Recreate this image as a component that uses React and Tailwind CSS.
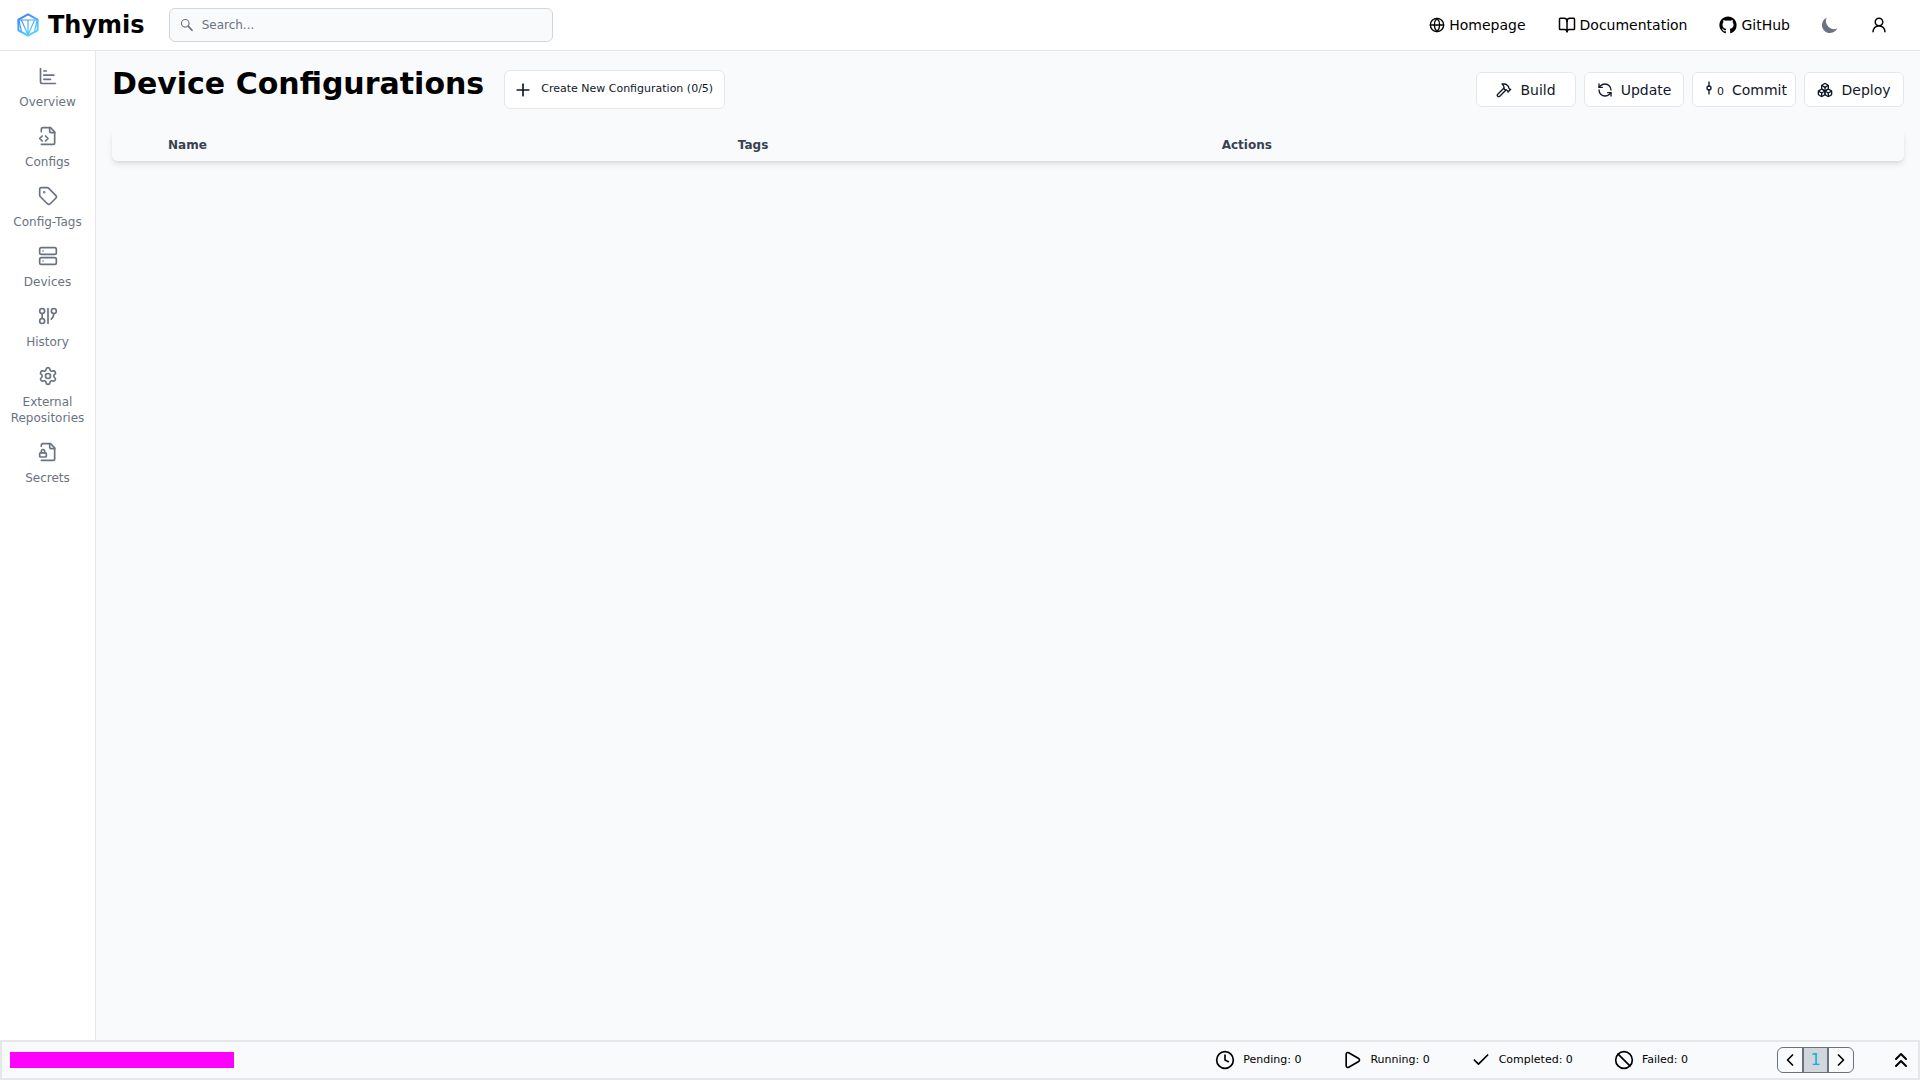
import React from "react";
import {
  Globe, BookOpen, ChartBar, Tag, Server, Settings, Hammer, RefreshCcw, Boxes, Plus,
  Clock, Play, Check, Ban, ChevronLeft, ChevronRight, ChevronsUp,
} from "lucide-react";

const stroke = {
  fill: "none",
  stroke: "currentColor",
  strokeWidth: 2,
  strokeLinecap: "round",
  strokeLinejoin: "round",
  viewBox: "0 0 24 24",
};

function Logo() {
  return (
    <svg className="h-6 w-6" viewBox="0 0 24 24" fill="none" stroke="url(#logoGradient)" strokeWidth="2" strokeLinejoin="round" aria-hidden="true">
      <defs>
        <linearGradient id="logoGradient" x1="4" y1="2" x2="18" y2="22" gradientUnits="userSpaceOnUse">
          <stop stopColor="#3b82f6" />
          <stop offset="1" stopColor="#5ad8fb" />
        </linearGradient>
      </defs>
      <path d="M12 1.3 L21.6 6.6 V17.4 L12 22.7 L2.4 17.4 V6.6 Z" />
      <path d="M2.8 7 H21.2 M12 7 V22 M5.4 7 L12 22 L18.6 7 M3 8 L5.5 18.5 M21 8 L18.5 18.5" strokeWidth="1.2" />
    </svg>
  );
}

function FileCode(props) {
  return (
    <svg {...stroke} {...props} aria-hidden="true">
      <path d="M4 7V4a2 2 0 0 1 2-2h9l5 5v13a2 2 0 0 1-2 2H4" />
      <path d="M14 2v4a2 2 0 0 0 2 2h4M5 12l-3 3 3 3M9 18l3-3-3-3" />
    </svg>
  );
}

function FileLock(props) {
  return (
    <svg {...stroke} {...props} aria-hidden="true">
      <path d="M4 5V4a2 2 0 0 1 2-2h9l5 5v13a2 2 0 0 1-2 2H4" />
      <path d="M14 2v4a2 2 0 0 0 2 2h4" />
      <rect x="2" y="13" width="8" height="5" rx="1" />
      <path d="M8 13v-2a2 2 0 1 0-4 0v2" />
    </svg>
  );
}

function HistoryIcon(props) {
  return (
    <svg {...stroke} {...props} aria-hidden="true">
      <circle cx="5" cy="6" r="3" />
      <path d="M5 9v6M12 3v18" />
      <circle cx="5" cy="18" r="3" />
      <circle cx="19" cy="6" r="3" />
      <path d="M16 15.7A9 9 0 0 0 19 9" />
    </svg>
  );
}

function CommitIcon(props) {
  return (
    <svg {...stroke} {...props} aria-hidden="true">
      <path d="M12 3v6M12 15v6" />
      <circle cx="12" cy="12" r="3" />
    </svg>
  );
}

function UserIcon(props) {
  return (
    <svg {...stroke} {...props} aria-hidden="true">
      <circle cx="12" cy="8" r="5" />
      <path d="M20 21a8 8 0 0 0-16 0" />
    </svg>
  );
}

function GitHubIcon(props) {
  return (
    <svg viewBox="0 0 24 24" fill="currentColor" {...props} aria-hidden="true">
      <path d="M12 .5C5.65.5.5 5.65.5 12c0 5.09 3.29 9.4 7.86 10.92.58.1.79-.25.79-.55v-2.1c-3.2.7-3.87-1.36-3.87-1.36-.52-1.33-1.28-1.69-1.28-1.69-1.04-.71.08-.7.08-.7 1.16.08 1.77 1.19 1.77 1.19 1.03 1.76 2.69 1.25 3.35.96.1-.75.4-1.25.73-1.54-2.55-.29-5.24-1.28-5.24-5.69 0-1.26.45-2.28 1.19-3.09-.12-.29-.52-1.46.11-3.05 0 0 .97-.31 3.17 1.18a11 11 0 0 1 5.76 0c2.2-1.49 3.17-1.18 3.17-1.18.63 1.59.23 2.76.11 3.05.74.81 1.19 1.83 1.19 3.09 0 4.42-2.7 5.39-5.26 5.68.41.36.78 1.06.78 2.14v3.11c0 .3.21.66.79.55A11.51 11.51 0 0 0 23.5 12C23.5 5.65 18.35.5 12 .5z" />
    </svg>
  );
}

const navItems = [
  { label: "Overview", icon: ChartBar },
  { label: "Configs", icon: FileCode },
  { label: "Config-Tags", icon: Tag },
  { label: "Devices", icon: Server },
  { label: "History", icon: HistoryIcon },
  { label: "External Repositories", icon: Settings },
  { label: "Secrets", icon: FileLock },
];

const statuses = [
  { label: "Pending: 0", icon: Clock },
  { label: "Running: 0", icon: Play },
  { label: "Completed: 0", icon: Check },
  { label: "Failed: 0", icon: Ban },
];

const actionClass =
  "flex h-[35px] min-w-[100px] items-center justify-center gap-2 rounded-md border border-gray-200 bg-white px-2 text-sm text-gray-900";

export default function App() {
  return (
    <div className="flex h-screen flex-col bg-gray-50 font-['DejaVu_Sans',sans-serif] text-black">
      <header className="flex items-center justify-between border-b border-gray-200 bg-white px-4 py-2">
        <div className="flex items-center">
          <a href="#" className="flex items-center gap-2">
            <Logo />
            <span className="text-2xl leading-8 font-bold">Thymis</span>
          </a>
          <label className="ml-6 flex h-[34px] w-96 items-center gap-2 rounded-md border border-gray-300 bg-gray-50 px-2.5 text-gray-500">
            <svg {...stroke} className="h-3.5 w-3.5 shrink-0" aria-hidden="true">
              <circle cx="9" cy="9" r="6.5" />
              <path d="M14 14l6.5 7" strokeWidth="3" />
            </svg>
            <input type="text" aria-label="Search" placeholder="Search..." className="min-w-0 flex-1 bg-transparent text-xs outline-none placeholder:text-gray-500" />
          </label>
        </div>
        <div className="flex items-center gap-[30px] pr-4">
          <nav className="flex items-center gap-8 text-sm">
            <a href="#" className="flex items-center gap-1"><Globe size={16} />Homepage</a>
            <a href="#" className="flex items-center gap-1"><BookOpen size={18} />Documentation</a>
            <a href="#" className="flex items-center gap-1"><GitHubIcon className="h-[18px] w-[18px]" />GitHub</a>
          </nav>
          <button type="button" aria-label="Toggle dark mode" className="text-gray-500">
            <svg className="h-5 w-5" viewBox="0 0 20 20" fill="currentColor" aria-hidden="true">
              <path d="M17.293 13.293A8 8 0 0 1 6.707 2.707a8.001 8.001 0 1 0 10.586 10.586z" />
            </svg>
          </button>
          <button type="button" aria-label="Account"><UserIcon className="h-[18px] w-[18px]" /></button>
        </div>
      </header>

      <div className="flex min-h-0 flex-1">
        <aside className="w-24 shrink-0 border-r border-gray-200 bg-white pt-[7px]">
          <ul>
            {navItems.map(({ label, icon: Icon }) => (
              <li key={label}>
                <a href="#" className="flex flex-col items-center gap-2 p-2 text-center text-xs text-gray-500">
                  <Icon width={20} height={20} />
                  <span>{label}</span>
                </a>
              </li>
            ))}
          </ul>
        </aside>

        <main className="min-w-0 flex-1 px-4 pt-[15px]">
          <div className="flex items-start justify-between">
            <div className="flex items-start gap-5">
              <h1 className="text-3xl leading-9 font-bold">Device Configurations</h1>
              <button type="button" className="mt-1 flex h-[39px] min-w-[221px] items-center gap-2 rounded-md border border-gray-200 bg-white px-2 text-[11px] text-gray-900">
                <Plus size={20} />
                Create New Configuration (0/5)
              </button>
            </div>
            <div className="mt-1.5 flex gap-2">
              <button type="button" className={actionClass}><Hammer size={16} />Build</button>
              <button type="button" className={actionClass}><RefreshCcw size={16} />Update</button>
              <button type="button" className={actionClass}>
                <span className="flex items-start">
                  <CommitIcon className="h-4 w-4" />
                  <span className="mt-1 text-[11px] leading-4">0</span>
                </span>
                Commit
              </button>
              <button type="button" className={actionClass}><Boxes size={16} />Deploy</button>
            </div>
          </div>
          <table className="mt-5 w-full table-fixed rounded-md text-left text-xs text-gray-700 shadow-md">
            <thead>
              <tr>
                <th className="w-12 p-2" aria-label="Select" />
                <th className="w-[31.8%] p-2 font-bold">Name</th>
                <th className="w-[27%] p-2 font-bold">Tags</th>
                <th className="p-2 font-bold">Actions</th>
              </tr>
            </thead>
          </table>
        </main>
      </div>

      <footer className="flex h-10 items-center justify-between border-2 border-gray-200 bg-gray-50 pr-[5px] pl-2">
        <div className="h-4 w-56 bg-[#ff00ff]" />
        <div className="flex items-center">
          <ul className="flex items-center gap-[41px] text-[11px]">
            {statuses.map(({ label, icon: Icon }) => (
              <li key={label} className="flex items-center gap-2">
                <Icon size={20} />
                {label}
              </li>
            ))}
          </ul>
          <div className="ml-[89px] flex h-[26px] w-[77px] overflow-hidden rounded-md border border-gray-500">
            <button type="button" aria-label="Previous page" className="flex flex-1 items-center justify-center"><ChevronLeft size={20} /></button>
            <button type="button" className="w-[27px] border-x-2 border-gray-500 bg-gray-300 text-base leading-6 text-[#06b6d4]">1</button>
            <button type="button" aria-label="Next page" className="flex flex-1 items-center justify-center"><ChevronRight size={20} /></button>
          </div>
          <button type="button" aria-label="Expand" className="ml-[35px]"><ChevronsUp size={24} /></button>
        </div>
      </footer>
    </div>
  );
}
